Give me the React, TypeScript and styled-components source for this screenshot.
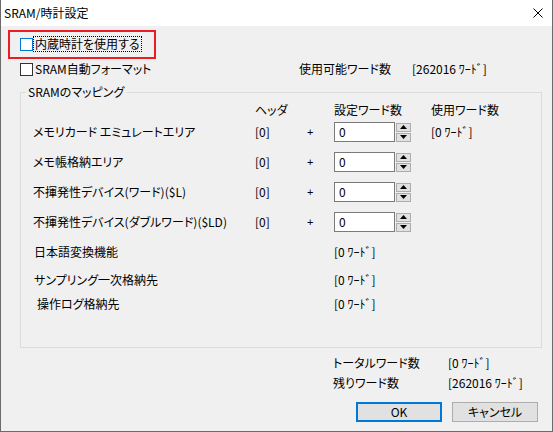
import React from 'react'
import styled, { createGlobalStyle } from 'styled-components'

const GlobalStyle = createGlobalStyle`
  html, body {
    margin: 0;
    padding: 0;
    background: #fff;
  }
  body {
    font-family: 'Noto Sans CJK JP', 'Noto Sans', sans-serif;
    font-size: 12px;
    color: #000;
    font-feature-settings: 'palt';
  }
`

const Window = styled.div`
  box-sizing: border-box;
  width: 553px;
  height: 432px;
  display: flex;
  flex-direction: column;
  background: #f0f0f0;
  border: 1px solid #6b6b6b;
  border-top: none;
`

const TitleBar = styled.div`
  flex: none;
  height: 26px;
  display: flex;
  align-items: center;
  justify-content: space-between;
  padding: 0 9px 0 3px;
  background: #fff;
  line-height: 14px;
  svg {
    display: block;
  }
`

const Body = styled.div`
  flex: 1;
  display: flex;
  flex-direction: column;
  padding: 4px 10px 0 7px;
`

const Highlight = styled.div`
  box-sizing: border-box;
  width: 148px;
  height: 29px;
  border: 2px solid #ed1c24;
  display: flex;
  align-items: center;
  padding: 0 0 1px 10px;
`

const CheckLabel = styled.label`
  display: flex;
  align-items: center;
  line-height: 14px;
  white-space: nowrap;
`

const Box = styled.span<{ $focused?: boolean }>`
  box-sizing: border-box;
  width: 13px;
  height: 13px;
  flex: none;
  background: #fff;
  border: 1px solid ${(p) => (p.$focused ? '#0078d7' : '#333')};
`

const LabelText = styled.span<{ $focused?: boolean }>`
  margin-left: 1px;
  padding: 0 1px;
  outline: ${(p) => (p.$focused ? '1px dotted #000' : 'none')};
`

const InfoRow = styled.div`
  display: grid;
  grid-template-columns: 279px 113px auto;
  align-items: center;
  height: 14px;
  margin: 3px 0 0 12px;
  line-height: 14px;
  white-space: nowrap;
`

const Group = styled.fieldset`
  box-sizing: border-box;
  width: 522px;
  height: 263px;
  margin: 9px 0 0 12px;
  padding: 0;
  border: 1px solid #dcdcdc;
  min-width: 0;
`

const Legend = styled.legend`
  margin-left: 5px;
  padding: 0 2px;
  line-height: 14px;
`

const GroupContent = styled.div`
  padding: 4px 0 0 12px;
`

const columns = '222px 52px 27px 97px auto'

const HeaderRow = styled.div`
  display: grid;
  grid-template-columns: ${columns};
  height: 14px;
  line-height: 14px;
  margin-bottom: 5px;
  white-space: nowrap;
`

const MapGrid = styled.div`
  display: grid;
  grid-template-columns: ${columns};
  grid-auto-rows: 20px;
  row-gap: 10px;
  align-items: center;
  line-height: 14px;
  white-space: nowrap;
`

const Plus = styled.span`
  font-family: 'Liberation Sans', sans-serif;
  font-size: 11px;
`

const Spin = styled.div`
  display: flex;
  align-items: center;
  gap: 1px;
`

const NumberBox = styled.div`
  box-sizing: border-box;
  width: 61px;
  height: 20px;
  background: #fff;
  border: 1px solid #7a7a7a;
  padding-left: 4px;
  line-height: 17px;
`

const SpinButtons = styled.div`
  display: flex;
  flex-direction: column;
  gap: 1px;
`

const SpinButton = styled.div`
  box-sizing: border-box;
  width: 15px;
  height: 9px;
  border: 1px solid #adadad;
  background: #e1e1e1;
  display: flex;
  align-items: center;
  justify-content: center;
  svg {
    display: block;
  }
`

const LowerList = styled.div`
  display: flex;
  flex-direction: column;
  margin-top: 13px;
`

const LowerRow = styled.div<{ $top: number; $indent?: number }>`
  display: grid;
  grid-template-columns: 301px auto;
  height: 14px;
  line-height: 14px;
  margin-top: ${(p) => p.$top}px;
  padding-left: ${(p) => p.$indent ?? 0}px;
  white-space: nowrap;
  span:last-child {
    margin-left: ${(p) => -(p.$indent ?? 0)}px;
  }
`

const Totals = styled.div`
  display: grid;
  grid-template-columns: 115px auto;
  grid-auto-rows: 14px;
  row-gap: 6px;
  margin: 8px 0 0 325px;
  line-height: 14px;
  white-space: nowrap;
`

const Actions = styled.div`
  display: flex;
  justify-content: flex-end;
  gap: 10px;
  margin: 12px 4px 0 0;
`

const Button = styled.button<{ $primary?: boolean }>`
  box-sizing: border-box;
  width: 86px;
  height: 20px;
  padding: 0;
  font: inherit;
  line-height: 14px;
  color: #000;
  background: #e1e1e1;
  border: ${(p) => (p.$primary ? '2px solid #0078d7' : '1px solid #adadad')};
`

const Arrow: React.FC<{ down?: boolean }> = ({ down }) => (
  <svg width="7" height="4" viewBox="0 0 7 4">
    <polygon points={down ? '0,0 7,0 3.5,4' : '0,4 3.5,0 7,4'} fill="#000" />
  </svg>
)

const Spinner: React.FC<{ value: string }> = ({ value }) => (
  <Spin>
    <NumberBox>{value}</NumberBox>
    <SpinButtons>
      <SpinButton>
        <Arrow />
      </SpinButton>
      <SpinButton>
        <Arrow down />
      </SpinButton>
    </SpinButtons>
  </Spin>
)

const mapping = [
  { label: 'メモリカード エミュレートエリア', used: '[0 ﾜｰﾄﾞ]' },
  { label: 'メモ帳格納エリア', used: '' },
  { label: '不揮発性デバイス(ワード)($L)', used: '' },
  { label: '不揮発性デバイス(ダブルワード)($LD)', used: '' },
]

const others = [
  { label: '日本語変換機能', top: 0, indent: 1 },
  { label: 'サンプリング一次格納先', top: 14, indent: 1 },
  { label: '操作ログ格納先', top: 10, indent: 4 },
]

export default function App() {
  return (
    <>
      <GlobalStyle />
      <Window>
        <TitleBar>
          <span>SRAM/時計設定</span>
          <svg width="10" height="10" viewBox="0 0 10 10">
            <path d="M0.5 0.5 L9.5 9.5 M9.5 0.5 L0.5 9.5" stroke="#000" strokeWidth="1" />
          </svg>
        </TitleBar>
        <Body>
          <Highlight>
            <CheckLabel>
              <Box $focused />
              <LabelText $focused>内蔵時計を使用する</LabelText>
            </CheckLabel>
          </Highlight>
          <InfoRow>
            <CheckLabel>
              <Box />
              <LabelText>SRAM自動フォーマット</LabelText>
            </CheckLabel>
            <span>使用可能ワード数</span>
            <span>[262016 ﾜｰﾄﾞ]</span>
          </InfoRow>
          <Group>
            <Legend>SRAMのマッピング</Legend>
            <GroupContent>
              <HeaderRow>
                <span />
                <span>ヘッダ</span>
                <span />
                <span>設定ワード数</span>
                <span>使用ワード数</span>
              </HeaderRow>
              <MapGrid>
                {mapping.map((row) => (
                  <React.Fragment key={row.label}>
                    <span>{row.label}</span>
                    <span>[0]</span>
                    <Plus>+</Plus>
                    <Spinner value="0" />
                    <span>{row.used}</span>
                  </React.Fragment>
                ))}
              </MapGrid>
              <LowerList>
                {others.map((row) => (
                  <LowerRow key={row.label} $top={row.top} $indent={row.indent}>
                    <span>{row.label}</span>
                    <span>[0 ﾜｰﾄﾞ]</span>
                  </LowerRow>
                ))}
              </LowerList>
            </GroupContent>
          </Group>
          <Totals>
            <span>トータルワード数</span>
            <span>[0 ﾜｰﾄﾞ]</span>
            <span>残りワード数</span>
            <span>[262016 ﾜｰﾄﾞ]</span>
          </Totals>
          <Actions>
            <Button $primary>OK</Button>
            <Button>キャンセル</Button>
          </Actions>
        </Body>
      </Window>
    </>
  )
}
